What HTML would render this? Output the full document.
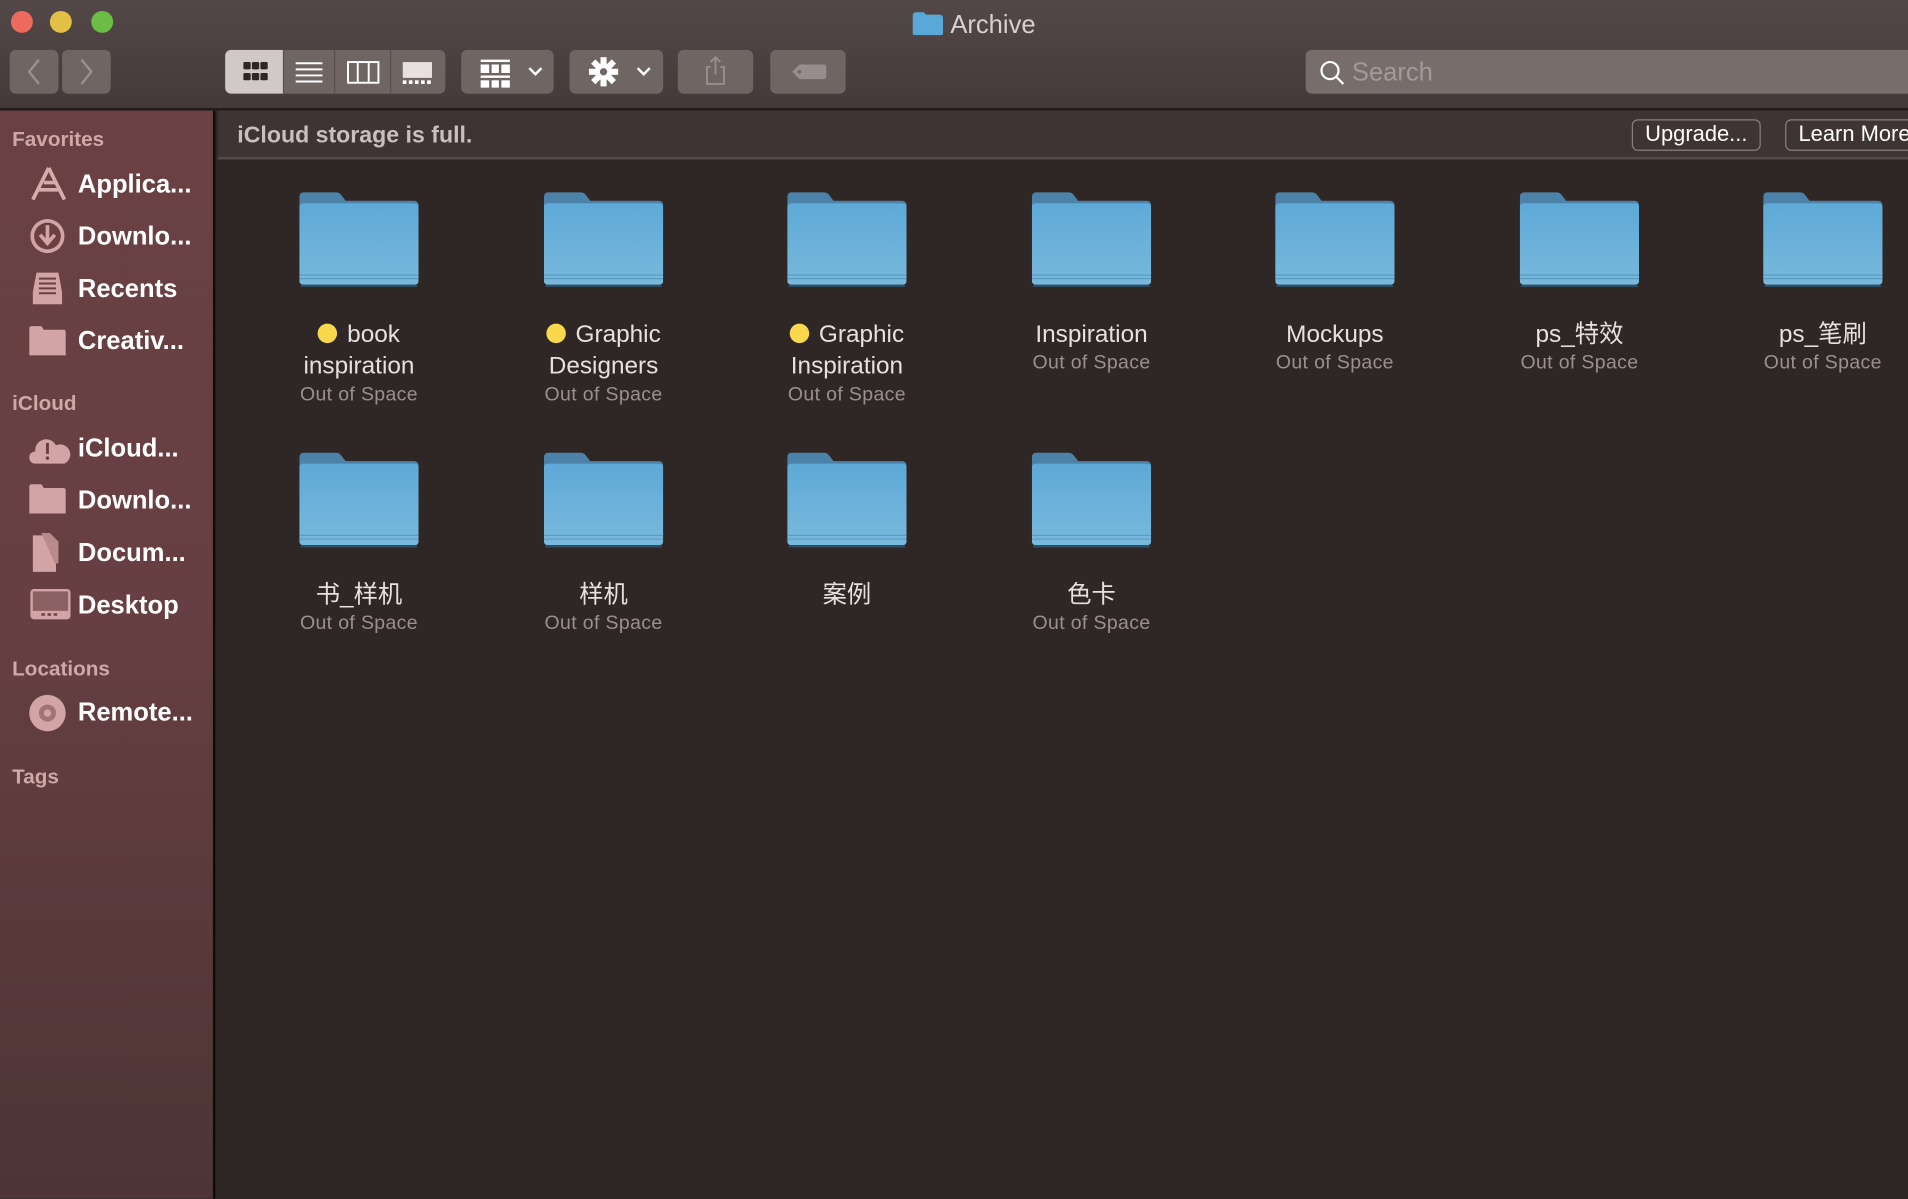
<!DOCTYPE html>
<html><head><meta charset="utf-8"><style>
*{margin:0;padding:0;box-sizing:border-box}
html,body{width:1908px;height:1198px;overflow:hidden;background:#2f2626}
#w{position:absolute;left:0;top:0;width:1568px;height:985px;transform:scale(1.21684);transform-origin:0 0;font-family:"Liberation Sans","Noto Sans CJK SC",sans-serif}
.tb{position:absolute;left:0;top:0;width:1568px;height:90px;background:linear-gradient(#534847,#443a39);border-bottom:1px solid #1a1414}
.dot{position:absolute;top:9px;width:18px;height:18px;border-radius:50%}
.btn{position:absolute;top:41px;height:36px;background:#6f6563;border-radius:5px}
.sb{position:absolute;left:0;top:91px;width:177px;height:894px;background:linear-gradient(#6a4043 0%,#673f42 45%,#4d3535 100%);border-right:2px solid #100c0c}
.h{position:absolute;left:10px;font-size:17px;color:#d0a8a8;font-weight:bold}
.it{position:absolute;left:64px;font-size:21px;color:#fff;font-weight:bold}
.ic{position:absolute;left:24px}
.main{position:absolute;left:179px;top:91px;right:0;bottom:0;background:#2f2626}
.ban{position:absolute;left:179px;top:91px;right:0;height:40px;background:#3f3434;border-bottom:2px solid #554a49}
.f{position:absolute;width:200px;text-align:center;color:#e6e0e0;font-size:20px;line-height:26px}
.f svg{display:block;margin:0 auto 26px}
.s{font-size:16px;color:#9a9090;line-height:22px;letter-spacing:.3px}
.y{display:inline-block;width:16px;height:16px;border-radius:50%;background:#f9d94b;margin-right:8px;vertical-align:-1px}
.pb{position:absolute;top:98px;height:26px;border:1.5px solid #8a7f7e;border-radius:5px;color:#fff;font-size:18px;line-height:22px;padding:0 10px;white-space:nowrap}
</style></head><body><div id="w">
<div class="tb">
<div class="dot" style="left:9px;background:#ee6a5e"></div>
<div class="dot" style="left:41px;background:#e2c045"></div>
<div class="dot" style="left:75px;background:#6bbd45"></div>
<div style="position:absolute;left:750px;top:9px;font-size:21px;color:#d8d0cf"><svg width="25" height="19" style="vertical-align:-2px;margin-right:6px"><path d="M0 3q0-3 3-3h6l2 2h11q3 0 3 3v12q0 2-2 2H2q-2 0-2-2z" fill="#5aa8d8"/></svg>Archive</div>
<div class="btn" style="left:8px;width:40px"><svg width="40" height="36"><path d="M24 8l-8 10 8 10" stroke="#9a908f" stroke-width="2" fill="none"/></svg></div>
<div class="btn" style="left:51px;width:40px"><svg width="40" height="36"><path d="M16 8l8 10-8 10" stroke="#9a908f" stroke-width="2" fill="none"/></svg></div>
<div class="btn" style="left:185px;width:181px;overflow:hidden">
<div style="position:absolute;left:0;top:0;width:48px;height:36px;background:#d1c9c9"></div>
<svg width="181" height="36" style="position:absolute;left:0;top:0">
<g fill="#2f2626"><rect x="15" y="10" width="6" height="6" rx="1"/><rect x="22" y="10" width="6" height="6" rx="1"/><rect x="29" y="10" width="6" height="6" rx="1"/><rect x="15" y="19" width="6" height="6" rx="1"/><rect x="22" y="19" width="6" height="6" rx="1"/><rect x="29" y="19" width="6" height="6" rx="1"/></g>
<g stroke="#fff" stroke-width="1.6"><path d="M58 11h22M58 16h22M58 21h22M58 26h22"/><rect x="101" y="10" width="25" height="17" fill="none"/><path d="M109 10v17M118 10v17"/></g>
<rect x="146" y="10" width="24" height="13" fill="#e8e0e0"/><g fill="#fff"><rect x="146" y="25" width="3" height="3"/><rect x="151" y="25" width="3" height="3"/><rect x="156" y="25" width="3" height="3"/><rect x="161" y="25" width="3" height="3"/><rect x="166" y="25" width="3" height="3"/></g>
<path d="M48 0v36M90 0v36M136 0v36" stroke="#5a504f"/></svg></div>
<div class="btn" style="left:379px;width:76px"><svg width="76" height="36"><g fill="#fff"><rect x="16" y="8" width="24" height="2"/><rect x="16" y="12" width="7" height="7"/><rect x="25" y="12" width="6" height="7"/><rect x="33" y="12" width="7" height="7"/><rect x="16" y="21" width="24" height="2"/><rect x="16" y="25" width="7" height="6"/><rect x="25" y="25" width="6" height="6"/><rect x="33" y="25" width="7" height="6"/></g><path d="M56 15l5 5 5-5" stroke="#fff" stroke-width="2" fill="none"/></svg></div>
<div class="btn" style="left:468px;width:77px"><svg width="77" height="36"><g transform="translate(28 18)" fill="#fff"><circle r="7"/><g><rect x="-2.5" y="-12" width="5" height="24"/><rect x="-2.5" y="-12" width="5" height="24" transform="rotate(45)"/><rect x="-2.5" y="-12" width="5" height="24" transform="rotate(90)"/><rect x="-2.5" y="-12" width="5" height="24" transform="rotate(135)"/></g><circle r="3" fill="#6f6563"/></g><path d="M56 15l5 5 5-5" stroke="#fff" stroke-width="2" fill="none"/></svg></div>
<div class="btn" style="left:557px;width:62px"><svg width="62" height="36"><path d="M27 14h-3v14h14V14h-3M31 6v14M27 10l4-4 4 4" stroke="#978d8c" stroke-width="1.6" fill="none"/></svg></div>
<div class="btn" style="left:633px;width:62px"><svg width="62" height="36"><path d="M24 12h20q2 0 2 2v8q0 2-2 2H24l-6-6z" fill="#978d8c"/><circle cx="24" cy="18" r="1.5" fill="#6f6563"/></svg></div>
<div class="btn" style="left:1073px;width:500px;background:#776d6b"><svg width="30" height="36" style="position:absolute;left:8px"><circle cx="12" cy="17" r="7" stroke="#fff" stroke-width="1.8" fill="none"/><path d="M17 22l6 6" stroke="#fff" stroke-width="1.8"/></svg><span style="position:absolute;left:38px;top:7px;font-size:21px;color:#a39a99">Search</span></div>
</div>
<div class="sb">
<div class="h" style="top:14px">Favorites</div>
<svg class="ic" style="top:45px" width="32" height="30"><path d="M16 2L3 28M16 2l13 26M8 20h16M12 14l10 0" stroke="#d8acac" stroke-width="3" fill="none"/></svg>
<div class="it" style="top:49px">Applica...</div>
<svg class="ic" style="top:88px" width="32" height="32"><circle cx="15" cy="15" r="14" fill="#d2a4a5"/><circle cx="15" cy="15" r="11" fill="#6a4043"/><path d="M15 6v14M9 14l6 7 6-7" stroke="#d2a4a5" stroke-width="3" fill="none"/></svg>
<div class="it" style="top:92px">Downlo...</div>
<svg class="ic" style="top:131px" width="32" height="32"><path d="M3 18l3-16h18l3 16v10H3z" fill="#d2a4a5"/><path d="M8 7h14M8 11h14M8 15h14M8 19h14" stroke="#6a4043" stroke-width="1.6"/></svg>
<div class="it" style="top:135px">Recents</div>
<svg class="ic" style="top:176px" width="32" height="28"><path d="M0 3q0-2 2-2h8l2 3h16q2 0 2 2v19H0z" fill="#d2a4a5"/></svg>
<div class="it" style="top:178px">Creativ...</div>
<div class="h" style="top:231px">iCloud</div>
<svg class="ic" style="top:266px" width="34" height="26"><path d="M5 24a5 5 0 010-10 9 9 0 0117-5 7 7 0 017 15z" fill="#d2a4a5"/><path d="M15 7v9" stroke="#6a4043" stroke-width="2.4"/><circle cx="15" cy="19.5" r="1.4" fill="#6a4043"/></svg>
<div class="it" style="top:266px">iCloud...</div>
<svg class="ic" style="top:306px" width="32" height="28"><path d="M0 3q0-2 2-2h8l2 3h16q2 0 2 2v19H0z" fill="#d2a4a5"/></svg>
<div class="it" style="top:309px">Downlo...</div>
<svg class="ic" style="top:347px" width="32" height="34"><path d="M3 2h12l7 7v23H3z" fill="#d2a4a5"/><path d="M10 0h7l7 7v18h-3" fill="#b88a8b"/></svg>
<div class="it" style="top:352px">Docum...</div>
<svg class="ic" style="top:392px" width="34" height="28"><rect x="1" y="1" width="33" height="25" rx="3" fill="#d2a4a5"/><rect x="3" y="3" width="29" height="16" fill="#8b6163"/><g fill="#6a4043"><rect x="10" y="21" width="3" height="2"/><rect x="15" y="21" width="3" height="2"/><rect x="20" y="21" width="3" height="2"/></g></svg>
<div class="it" style="top:395px">Desktop</div>
<div class="h" style="top:449px">Locations</div>
<svg class="ic" style="top:479px" width="32" height="32"><circle cx="15" cy="16" r="15" fill="#d2a4a5"/><circle cx="15" cy="16" r="7" fill="#9e7476"/><circle cx="15" cy="16" r="3" fill="#d2a4a5"/></svg>
<div class="it" style="top:483px">Remote...</div>
<div class="h" style="top:538px">Tags</div>
</div>
<div class="main"></div>
<div class="ban"><div style="position:absolute;left:16px;top:10px;font-size:19px;color:#c8c0bf;font-weight:bold">iCloud storage is full.</div></div>
<div class="pb" style="left:1341px">Upgrade...</div>
<div class="pb" style="left:1467px;width:120px">Learn More</div>
<svg width="0" height="0" style="position:absolute"><defs>
<linearGradient id="g" x1="0" y1="0" x2="0" y2="1"><stop offset="0" stop-color="#5ea9d8"/><stop offset="1" stop-color="#79b9dc"/></linearGradient>
<symbol id="fd" viewBox="0 0 98 78"><path d="M0 4q0-4 4-4h26q3 0 5 3l3 4h56q4 0 4 4v60H0z" fill="#4c82a8"/><rect x="0" y="9" width="98" height="67" rx="3" fill="url(#g)"/><path d="M0 68h98M0 71h98" stroke="#5a9cc6" stroke-width="1"/><rect x="1" y="76" width="96" height="2" rx="1" fill="#2a4f66"/></symbol></defs></svg>
<div class="f" style="left:195px;top:158px"><svg width="98" height="78"><use href="#fd"/></svg><div><span class="y"></span>book</div><div>inspiration</div><div class="s">Out of Space</div></div>
<div class="f" style="left:396px;top:158px"><svg width="98" height="78"><use href="#fd"/></svg><div><span class="y"></span>Graphic</div><div>Designers</div><div class="s">Out of Space</div></div>
<div class="f" style="left:596px;top:158px"><svg width="98" height="78"><use href="#fd"/></svg><div><span class="y"></span>Graphic</div><div>Inspiration</div><div class="s">Out of Space</div></div>
<div class="f" style="left:797px;top:158px"><svg width="98" height="78"><use href="#fd"/></svg><div>Inspiration</div><div class="s">Out of Space</div></div>
<div class="f" style="left:997px;top:158px"><svg width="98" height="78"><use href="#fd"/></svg><div>Mockups</div><div class="s">Out of Space</div></div>
<div class="f" style="left:1198px;top:158px"><svg width="98" height="78"><use href="#fd"/></svg><div>ps_特效</div><div class="s">Out of Space</div></div>
<div class="f" style="left:1398px;top:158px"><svg width="98" height="78"><use href="#fd"/></svg><div>ps_笔刷</div><div class="s">Out of Space</div></div>
<div class="f" style="left:195px;top:372px"><svg width="98" height="78"><use href="#fd"/></svg><div>书_样机</div><div class="s">Out of Space</div></div>
<div class="f" style="left:396px;top:372px"><svg width="98" height="78"><use href="#fd"/></svg><div>样机</div><div class="s">Out of Space</div></div>
<div class="f" style="left:596px;top:372px"><svg width="98" height="78"><use href="#fd"/></svg><div>案例</div></div>
<div class="f" style="left:797px;top:372px"><svg width="98" height="78"><use href="#fd"/></svg><div>色卡</div><div class="s">Out of Space</div></div>
</div></body></html>
